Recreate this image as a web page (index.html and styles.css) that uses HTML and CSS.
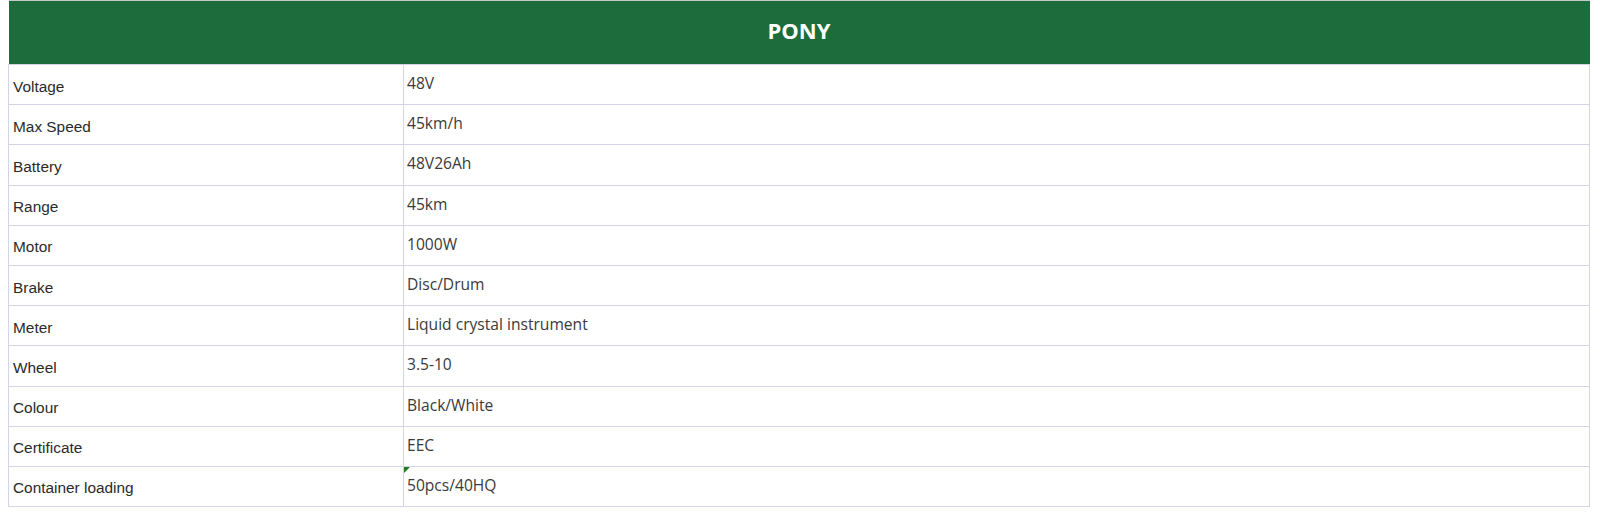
FILE: index.html
```html
<!DOCTYPE html>
<html>
<head>
<meta charset="utf-8">
<link rel="stylesheet" href="styles.css">
</head>
<body>
<table class="spec">
  <colgroup>
    <col class="col-label">
    <col class="col-value">
  </colgroup>
  <thead>
    <tr><th colspan="2" class="title">PONY</th></tr>
  </thead>
  <tbody>
    <tr><td class="label">Voltage</td><td class="value">48V</td></tr>
    <tr><td class="label">Max Speed</td><td class="value">45km/h</td></tr>
    <tr><td class="label">Battery</td><td class="value">48V26Ah</td></tr>
    <tr><td class="label">Range</td><td class="value">45km</td></tr>
    <tr><td class="label">Motor</td><td class="value">1000W</td></tr>
    <tr><td class="label">Brake</td><td class="value">Disc/Drum</td></tr>
    <tr><td class="label">Meter</td><td class="value">Liquid crystal instrument</td></tr>
    <tr><td class="label">Wheel</td><td class="value">3.5-10</td></tr>
    <tr><td class="label">Colour</td><td class="value">Black/White</td></tr>
    <tr><td class="label">Certificate</td><td class="value">EEC</td></tr>
    <tr><td class="label">Container loading</td><td class="value note">50pcs/40HQ</td></tr>
  </tbody>
</table>
</body>
</html>
```
FILE: styles.css
```css
html, body {
  margin: 0;
  padding: 0;
  background: #ffffff;
}
body {
  padding: 0 10px 0 8px;
}
.spec {
  width: 1582px;
  border-collapse: collapse;
  table-layout: fixed;
}
.col-label {
  width: 395px;
}
.title {
  height: 64px;
  box-sizing: border-box;
  padding: 0 0 5px 0;
  background: #1c6d3b;
  color: #ffffff;
  font-family: "Open Sans", "Noto Sans", sans-serif;
  font-weight: 700;
  font-size: 22px;
  text-align: center;
  vertical-align: middle;
  border-top: 1px solid #c8c8c8;
}
.spec tbody tr {
  height: 40.2px;
}
.spec td {
  padding: 0;
  border: 1px solid #d4d4e6;
  color: #2a2a2a;
  line-height: 20px;
}
.label {
  padding: 4px 0 0 4px !important;
  font-family: "Liberation Sans", Arial, sans-serif;
  font-size: 15.4px;
  vertical-align: middle;
}
.value {
  position: relative;
  padding: 8px 0 0 3px !important;
  font-family: "Open Sans", "Noto Sans", sans-serif;
  font-size: 15.6px;
  vertical-align: top;
  color: #3a3a3a !important;
}
.note::before {
  content: "";
  position: absolute;
  left: 0;
  top: 0;
  width: 0;
  height: 0;
  border-top: 6px solid #1a7a2a;
  border-right: 6px solid transparent;
}
```
